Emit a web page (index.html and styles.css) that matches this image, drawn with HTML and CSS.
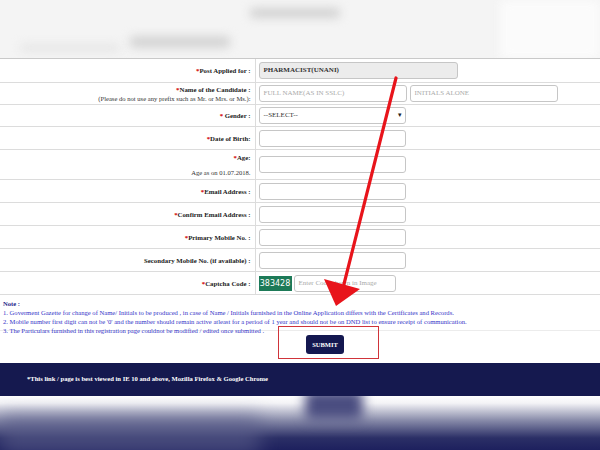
FILE: index.html
```html
<!DOCTYPE html>
<html>
<head>
<meta charset="utf-8">
<link rel="stylesheet" href="styles.css">
</head>
<body>
<div class="page">
  <header class="topblur">
    <div class="blob b1"></div>
    <div class="blob b2"></div>
    <div class="blob b3"></div>
    <div class="blob b4"></div>
  </header>
  <table class="form">
    <tr class="r24">
      <td class="lbl"><span class="req">*</span>Post Applied for :</td>
      <td class="fld"><div class="inp wide ro">PHARMACIST(UNANI)</div></td>
    </tr>
    <tr class="r22">
      <td class="lbl"><span class="req">*</span>Name of the Candidate :<br><span class="sub">(Please do not use any prefix such as Mr. or Mrs. or Ms.):</span></td>
      <td class="fld"><div class="pair"><div class="inp ph">FULL NAME(AS IN SSLC)</div><div class="inp ph">INITIALS ALONE</div></div></td>
    </tr>
    <tr class="r22">
      <td class="lbl"><span class="req">* </span>Gender :</td>
      <td class="fld"><div class="inp sel">--SELECT--<span class="caret">&#9662;</span></div></td>
    </tr>
    <tr class="r23">
      <td class="lbl"><span class="req">*</span>Date of Birth:</td>
      <td class="fld"><div class="inp"></div></td>
    </tr>
    <tr class="r30">
      <td class="lbl age"><span class="req">*</span>Age:<br><span class="sub agesub">Age as on 01.07.2018.</span></td>
      <td class="fld"><div class="inp"></div></td>
    </tr>
    <tr class="r23">
      <td class="lbl"><span class="req">*</span>Email Address :</td>
      <td class="fld"><div class="inp"></div></td>
    </tr>
    <tr class="r23">
      <td class="lbl"><span class="req">*</span>Confirm Email Address :</td>
      <td class="fld"><div class="inp"></div></td>
    </tr>
    <tr class="r23">
      <td class="lbl"><span class="req">*</span>Primary Mobile No. :</td>
      <td class="fld"><div class="inp"></div></td>
    </tr>
    <tr class="r23">
      <td class="lbl">Secondary Mobile No. (if available) :</td>
      <td class="fld"><div class="inp"></div></td>
    </tr>
    <tr class="r23">
      <td class="lbl"><span class="req">*</span>Captcha Code :</td>
      <td class="fld"><div class="cap"><span class="code">383428</span><div class="inp capin ph">Enter Code shown in Image</div></div></td>
    </tr>
  </table>
  <section class="notes">
    <div class="nt">Note :</div>
    <div>1. Goverment Gazette for change of Name/ Initials to be produced , in case of Name / Initials furnished in the Online Application differs with the Certificates and Records.</div>
    <div>2. Mobile number first digit can not be '0' and the number should remain active atleast for a period of 1 year and should not be on DND list to ensure receipt of communication.</div>
    <div>3. The Particulars furnished in this registration page couldnot be modified / edited once submitted .</div>
  </section>
  <div class="actions">
    <div class="hl"><button class="submit">SUBMIT</button></div>
  </div>
  <footer class="foot">*This link / page is best viewed in IE 10 and above, Mozilla Firefox &amp; Google Chrome</footer>
  <div class="bottom"><div class="bleft"></div><div class="bblob"></div></div>
  <svg class="arrow" width="600" height="450" viewBox="0 0 600 450">
    <line x1="396" y1="78" x2="344" y2="284" stroke="#e8141b" stroke-width="3.2" stroke-linecap="round"/>
    <polygon points="324,279 360,289 336,306" fill="#e8141b"/>
  </svg>
</div>
</body>
</html>
```
FILE: styles.css
```css
html, body { margin: 0; padding: 0; }
body { width: 600px; height: 450px; overflow: hidden; background: #fff; font-family: "Liberation Serif", "Times New Roman", serif; }
.page { position: relative; width: 600px; height: 450px; overflow: hidden; }
.topblur { position: relative; height: 59px; background: #f4f4f4; overflow: hidden; border-bottom: 1px solid #c9c9c9; box-sizing: border-box; }
.blob { position: absolute; background: #cfcfcf; filter: blur(5px); border-radius: 4px; }
.b1 { left: 250px; top: 8px; width: 90px; height: 10px; background: #d2d2d2; }
.b2 { left: 130px; top: 36px; width: 100px; height: 12px; background: #d4d4d4; }
.b3 { left: 20px; top: 44px; width: 100px; height: 8px; background: #e6e6e6; }
.b4 { left: 500px; top: 0; width: 100px; height: 59px; background: #fbfbfb; }
.form { width: 600px; border-collapse: collapse; }
.form td { border-bottom: 1px solid #dcdcdc; padding: 0; vertical-align: middle; }
.r24 td { height: 23px; }
.r22 td { height: 21px; }
.r23 td { height: 22px; }
.r30 td { height: 29px; }
.lbl { width: 255px; border-right: 1px solid #dcdcdc; text-align: right; padding-right: 4px !important; box-sizing: border-box; font-weight: bold; font-size: 6.8px; color: #222; line-height: 9px; }
.req { color: #d10000; }
.sub { font-weight: normal; color: #333; font-size: 6.6px; }
.age { vertical-align: top !important; padding-top: 3px !important; }
.agesub { display: inline-block; margin-top: 6px; }
.fld { padding-left: 3px !important; }
.inp { box-sizing: border-box; width: 147px; height: 17px; border: 1px solid #c6c6c6; border-radius: 3px; background: #fff; font-size: 7px; color: #333; padding-left: 4px; line-height: 15px; white-space: nowrap; overflow: hidden; }
.wide { width: 199px; }
.ro { background: #ececec; font-weight: bold; color: #333; }
.ph { color: #aaa; }
.pair { display: flex; gap: 3px; }
.pair .inp { width: 148px; }
.sel { position: relative; }
.caret { position: absolute; right: 3px; top: 0; font-size: 7px; color: #222; }
.cap { display: flex; gap: 2px; align-items: center; }
.code { background: #1d7a58; color: #fff; font-family: "DejaVu Sans", sans-serif; font-size: 8px; width: 33px; height: 15px; line-height: 15px; text-align: center; }
.capin { width: 102px; }
.notes { padding: 4px 3px 0; font-size: 6.6px; line-height: 9px; color: #3434c8; font-weight: normal; height: 31px; border-bottom: 1px solid #ececec; }
.nt { color: #1e1e8a; font-weight: bold; }
.actions { display: flex; height: 32px; padding-left: 278px; }
.hl { box-sizing: border-box; width: 101px; height: 33px; margin-top: -5px; border: 1px solid #d0343a; display: flex; align-items: center; padding-left: 27px; }
.submit { background: #141850; color: #fff; border: none; border-radius: 3px; width: 38px; height: 19px; font-family: "Liberation Serif", serif; font-weight: bold; font-size: 6.5px; padding: 0; margin-top: 4px; }
.foot { background: #15194f; color: #fff; height: 33px; line-height: 31px; padding-left: 27px; font-size: 6.6px; font-weight: bold; }
.bottom { position: relative; height: 60px; background: linear-gradient(#ffffff 0%, #f3f3f6 12%, #8a8dab 40%, #2b2f66 70%, #17195a 100%); overflow: hidden; }
.bleft { position: absolute; left: 0; top: 20px; width: 260px; height: 40px; background: #5a5d8a; filter: blur(10px); opacity: 0.6; }
.bblob { position: absolute; left: 305px; top: -6px; width: 58px; height: 30px; background: #4a4d80; filter: blur(6px); border-radius: 6px; }
.arrow { position: absolute; left: 0; top: 0; pointer-events: none; }
```
